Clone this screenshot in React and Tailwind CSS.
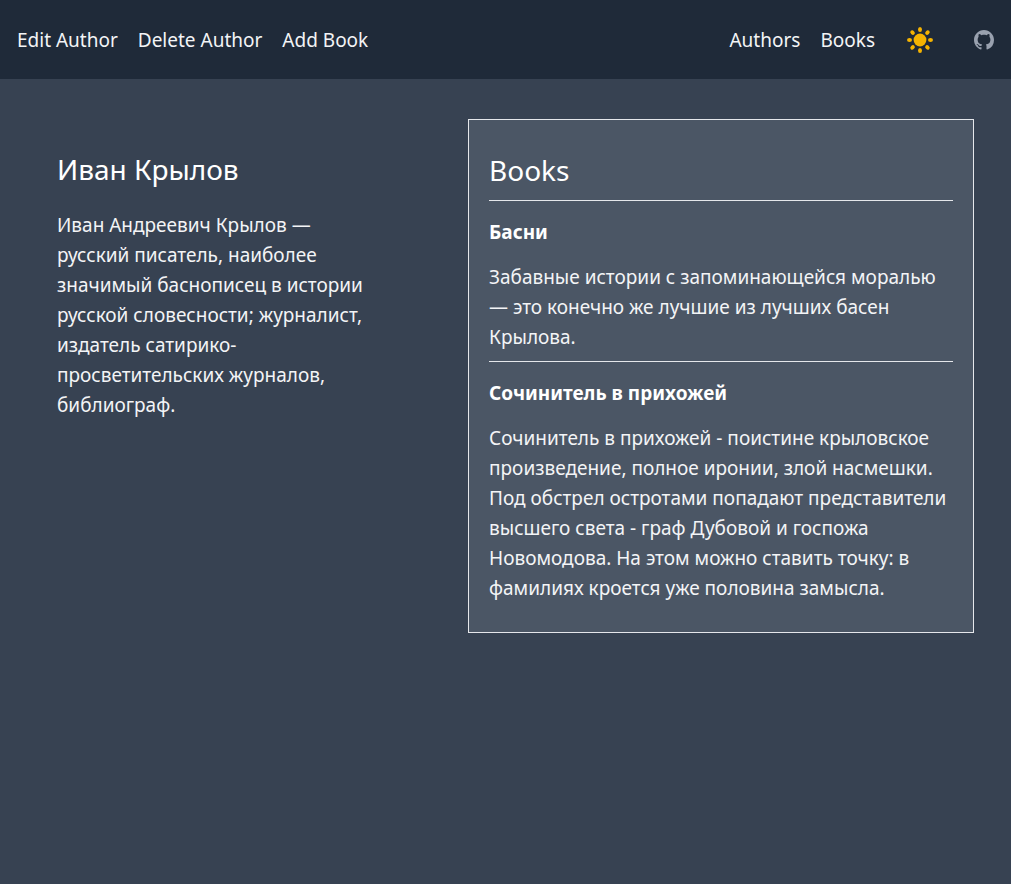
const books = [
  {
    title: 'Басни',
    text: 'Забавные истории с запоминающейся моралью — это конечно же лучшие из лучших басен Крылова.',
  },
  {
    title: 'Сочинитель в прихожей',
    text: 'Сочинитель в прихожей - поистине крыловское произведение, полное иронии, злой насмешки. Под обстрел остротами попадают представители высшего света - граф Дубовой и госпожа Новомодова. На этом можно ставить точку: в фамилиях кроется уже половина замысла.',
  },
];

const rayAngles = [0, 45, 90, 135, 180, 225, 270, 315];

function SunIcon() {
  return (
    <svg viewBox="0 0 26 26" className="size-[26px]" fill="#f5b301" aria-hidden="true">
      <circle cx="13" cy="13" r="6.4" />
      {rayAngles.map((a) => (
        <ellipse key={a} cx="13" cy="2.5" rx="2" ry="2.5" transform={`rotate(${a} 13 13)`} />
      ))}
    </svg>
  );
}

function GitHubIcon() {
  return (
    <svg viewBox="0 0 16 16" className="size-5" fill="currentColor" aria-hidden="true">
      <path d="M8 0C3.58 0 0 3.58 0 8c0 3.54 2.29 6.53 5.47 7.59.4.07.55-.17.55-.38 0-.19-.01-.82-.01-1.49-2.01.37-2.53-.49-2.69-.94-.09-.23-.48-.94-.82-1.13-.28-.15-.68-.52-.01-.53.63-.01 1.08.58 1.23.82.72 1.21 1.87.87 2.33.66.07-.52.28-.87.51-1.07-1.78-.2-3.64-.89-3.64-3.95 0-.87.31-1.59.82-2.15-.08-.2-.36-1.02.08-2.12 0 0 .67-.21 2.2.82.64-.18 1.32-.27 2-.27s1.36.09 2 .27c1.53-1.04 2.2-.82 2.2-.82.44 1.1.16 1.92.08 2.12.51.56.82 1.27.82 2.15 0 3.07-1.87 3.75-3.65 3.95.29.25.54.73.54 1.48 0 1.07-.01 1.93-.01 2.2 0 .21.15.46.55.38A8.01 8.01 0 0 0 16 8c0-4.42-3.58-8-8-8z" />
    </svg>
  );
}

export default function App() {
  return (
    <div className="min-h-screen bg-[#374252] font-['Noto_Sans','Open_Sans',sans-serif] text-[19px] leading-[30px] text-gray-100">
      <nav className="flex items-center justify-between bg-[#1f2a39] px-[17px] pt-[25px] pb-6">
        <div className="flex items-center gap-5">
          <a href="#edit">Edit Author</a>
          <button type="button">Delete Author</button>
          <a href="#add">Add Book</a>
        </div>
        <div className="flex items-center">
          <a href="#authors">Authors</a>
          <a href="#books" className="ml-5">Books</a>
          <button type="button" aria-label="Toggle theme" className="ml-8">
            <SunIcon />
          </button>
          <a href="#github" aria-label="GitHub" className="ml-[41px] text-gray-400">
            <GitHubIcon />
          </a>
        </div>
      </nav>
      <main className="flex items-start justify-between px-[37px] pt-10 pb-10">
        <section className="w-[37%] p-5">
          <h1 className="mt-2 mb-[18px] text-[28px] leading-[45px] text-white">Иван Крылов</h1>
          <p>
            Иван Андреевич Крылов — русский писатель, наиболее значимый баснописец в истории
            русской словесности; журналист, издатель сатирико-просветительских журналов,
            библиограф.
          </p>
        </section>
        <section className="w-[54%] border border-gray-200 bg-[#4b5665] px-5 pt-7 pb-7">
          <h2 className="mb-[7px] text-[28px] leading-[45px] text-white">Books</h2>
          {books.map((book) => (
            <article key={book.title} className="border-t border-gray-200 pt-4 pb-[9px] last:pb-[1px]">
              <h3 className="mb-[15px] font-bold text-white">{book.title}</h3>
              <p>{book.text}</p>
            </article>
          ))}
        </section>
      </main>
    </div>
  );
}
